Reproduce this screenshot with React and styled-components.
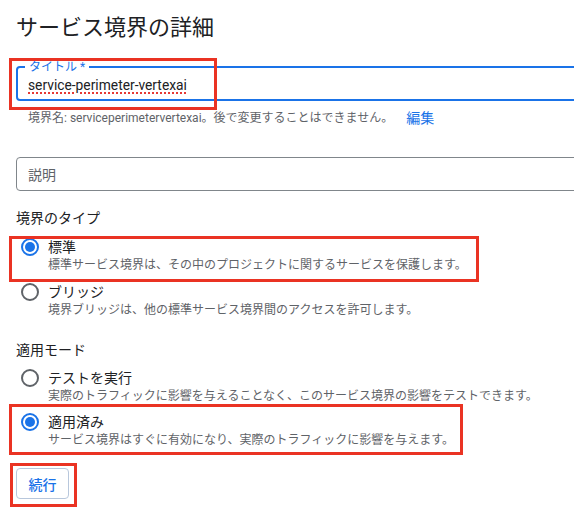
import React from "react";
import styled, { createGlobalStyle } from "styled-components";

const GlobalStyle = createGlobalStyle`
  html, body {
    margin: 0;
    background: #fff;
    overflow: hidden;
  }
  body {
    font-family: Roboto, "Noto Sans CJK JP", sans-serif;
    color: #202124;
  }
`;

const COLORS = {
  BLUE: "#1a73e8",
  TEXT: "#202124",
  SUB: "#5f6368",
  BORDER: "#80868b",
  RED: "#ea3323",
};

const Page = styled.div`
  box-sizing: border-box;
  min-height: 513px;
  padding: 14px 0 20px 16px;
  width: 574px;
  overflow: hidden;
`;

const Title = styled.h1`
  margin: 0;
  font-size: 22px;
  font-weight: 400;
  line-height: 28px;
  color: ${COLORS.TEXT};
`;

// 赤い注釈枠（コンテンツの上に重ねる）
const Mark = styled.div`
  position: absolute;
  left: ${({ $l }) => $l}px;
  top: ${({ $t }) => $t}px;
  width: ${({ $w }) => $w}px;
  height: ${({ $h }) => $h}px;
  border: 3px solid ${COLORS.RED};
  box-sizing: border-box;
  pointer-events: none;
`;

const OutlinedField = styled.div`
  position: relative;
  box-sizing: border-box;
  width: 600px;
  height: ${({ $focused }) => ($focused ? 35 : 34)}px;
  margin-top: ${({ $mt }) => $mt}px;
  border: ${({ $focused }) =>
    $focused ? `2px solid ${COLORS.BLUE}` : `1px solid ${COLORS.BORDER}`};
  border-radius: 4px;
  display: flex;
  align-items: center;
  padding-left: ${({ $focused }) => ($focused ? 10 : 11)}px;
`;

const FloatLabel = styled.span`
  position: absolute;
  top: -8px;
  left: 7px;
  padding: 0 4px;
  background: #fff;
  font-size: 12px;
  line-height: 14px;
  color: ${COLORS.BLUE};
`;

const InputText = styled.span`
  margin-top: 2px;
  font-size: 13.8px;
  color: ${COLORS.TEXT};
  text-decoration-line: underline;
  text-decoration-style: dotted;
  text-decoration-color: #e53935;
  text-decoration-thickness: 2px;
  text-underline-offset: 3px;
`;

const Placeholder = styled.span`
  font-size: 14px;
  color: ${COLORS.SUB};
`;

const Hint = styled.div`
  display: flex;
  align-items: center;
  margin-top: 8px;
  padding-left: 12px;
  font-size: 12px;
  line-height: 18px;
  color: ${COLORS.SUB};
`;

const EditLink = styled.a`
  margin-left: 13px;
  font-size: 14px;
  color: ${COLORS.BLUE};
  text-decoration: none;
`;

const SectionLabel = styled.div`
  margin-top: ${({ $mt }) => $mt}px;
  font-size: 14px;
  line-height: 20px;
  color: ${COLORS.TEXT};
`;

const Options = styled.div`
  display: flex;
  flex-direction: column;
  gap: ${({ $gap }) => $gap}px;
  margin-top: ${({ $mt }) => $mt}px;
`;

const Option = styled.label`
  position: relative;
  display: flex;
  gap: 9px;
  padding-left: 5px;
`;

const Radio = styled.span`
  flex: none;
  box-sizing: border-box;
  width: 18px;
  height: 18px;
  border-radius: 50%;
  border: 2px solid ${({ $checked }) => ($checked ? COLORS.BLUE : COLORS.SUB)};
  display: flex;
  align-items: center;
  justify-content: center;

  &::after {
    content: "";
    width: 10px;
    height: 10px;
    border-radius: 50%;
    background: ${({ $checked }) => ($checked ? COLORS.BLUE : "transparent")};
  }
`;

const OptionText = styled.div`
  display: flex;
  flex-direction: column;
`;

const OptionTitle = styled.span`
  font-size: 14px;
  line-height: 18px;
  color: ${COLORS.TEXT};
`;

const OptionDesc = styled.span`
  font-size: 12px;
  line-height: 18px;
  color: ${COLORS.SUB};
`;

const ButtonWrap = styled.div`
  position: relative;
  display: flex;
  margin-top: 19px;
  width: fit-content;
`;

const Button = styled.button`
  box-sizing: border-box;
  height: 31px;
  width: 53px;
  padding: 0;
  border: 1px solid #b8c7dc;
  border-radius: 4px;
  background: #fff;
  font-family: inherit;
  font-size: 14px;
  font-weight: 500;
  color: ${COLORS.BLUE};
`;

const RadioOption = ({ checked, title, desc, mark }) => (
  <Option>
    <Radio $checked={checked} />
    <OptionText>
      <OptionTitle>{title}</OptionTitle>
      <OptionDesc>{desc}</OptionDesc>
    </OptionText>
    {mark && <Mark {...mark} />}
  </Option>
);

export default function App() {
  return (
    <>
      <GlobalStyle />
      <Page>
        <Title>サービス境界の詳細</Title>

        <OutlinedField $focused $mt={24}>
          <FloatLabel>タイトル *</FloatLabel>
          <InputText>service-perimeter-vertexai</InputText>
          <Mark $l={-9} $t={-10} $w={208} $h={52} />
        </OutlinedField>
        <Hint>
          境界名: serviceperimetervertexai。後で変更することはできません。
          <EditLink href="#">編集</EditLink>
        </Hint>

        <OutlinedField $mt={30}>
          <Placeholder>説明</Placeholder>
        </OutlinedField>

        <SectionLabel $mt={17}>境界のタイプ</SectionLabel>
        <Options $mt={10} $gap={9}>
          <RadioOption
            checked
            title="標準"
            desc="標準サービス境界は、その中のプロジェクトに関するサービスを保護します。"
            mark={{ $l: -7, $t: -2, $w: 470, $h: 46 }}
          />
          <RadioOption
            title="ブリッジ"
            desc="境界ブリッジは、他の標準サービス境界間のアクセスを許可します。"
          />
        </Options>

        <SectionLabel $mt={21}>適用モード</SectionLabel>
        <Options $mt={9} $gap={8}>
          <RadioOption
            title="テストを実行"
            desc="実際のトラフィックに影響を与えることなく、このサービス境界の影響をテストできます。"
          />
          <RadioOption
            checked
            title="適用済み"
            desc="サービス境界はすぐに有効になり、実際のトラフィックに影響を与えます。"
            mark={{ $l: -7, $t: -9, $w: 454, $h: 51 }}
          />
        </Options>

        <ButtonWrap>
          <Button>続行</Button>
          <Mark $l={-6} $t={-5} $w={67} $h={44} />
        </ButtonWrap>
      </Page>
    </>
  );
}
